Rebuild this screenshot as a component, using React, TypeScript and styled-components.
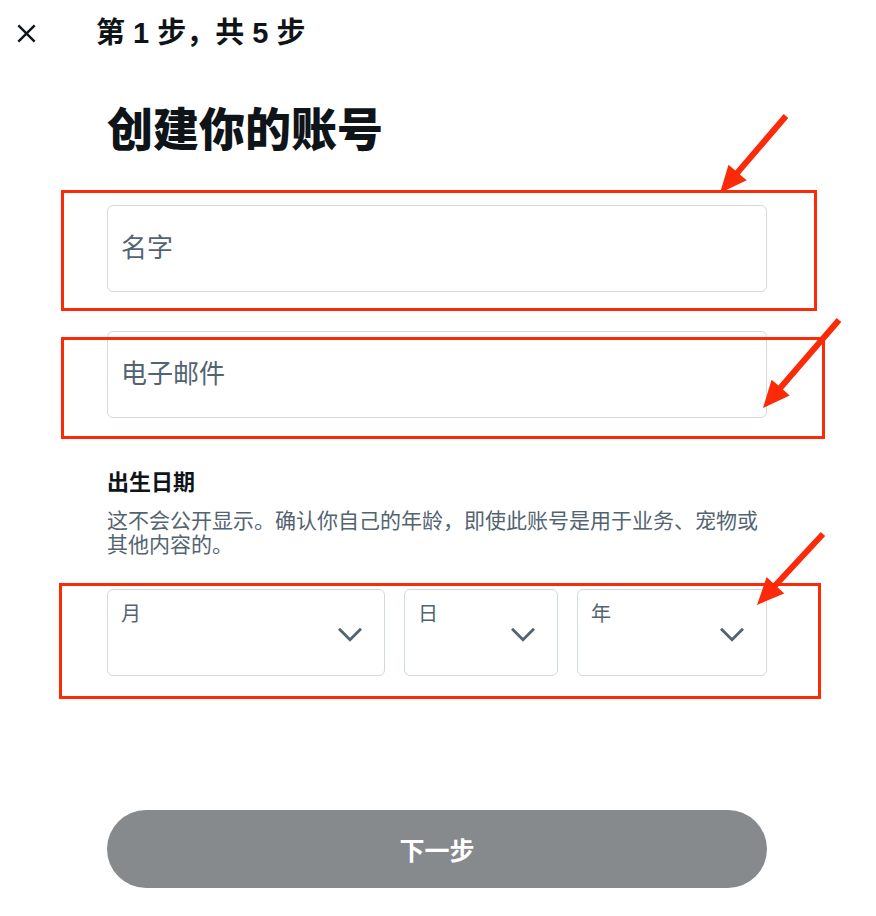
import React from "react";
import styled, { createGlobalStyle } from "styled-components";

const GlobalStyle = createGlobalStyle`
  html, body { margin: 0; padding: 0; background: #ffffff; }
  * { box-sizing: border-box; }
  body { font-family: "Liberation Sans", "Noto Sans CJK SC", sans-serif; }
`;

const FONT = `"Liberation Sans", "Noto Sans CJK SC", sans-serif`;
const RED = "#fb2a08";

const Page = styled.div`
  position: relative;
  width: 876px;
  min-height: 916px;
  background: #ffffff;
  font-family: ${FONT};
  color: #0f1419;
`;

const Header = styled.header`
  height: 66px;
  display: flex;
  align-items: center;
  padding-left: 11px;
`;

const CloseButton = styled.button`
  width: 30px;
  height: 30px;
  padding: 0;
  border: none;
  background: transparent;
  display: flex;
  align-items: center;
  justify-content: center;
  color: #0f1419;
`;

const StepTitle = styled.h2`
  margin: 0 0 0 55px;
  font-size: 29px;
  font-weight: 700;
  line-height: 34px;
  color: #0f1419;
`;

const Main = styled.main`
  width: 660px;
  margin-left: 107px;
  display: flex;
  flex-direction: column;
`;

const Title = styled.h1`
  margin: 36px 0 0;
  font-size: 46px;
  line-height: 56px;
  font-weight: 900;
  color: #0f1419;
`;

const Fields = styled.div`
  margin-top: 47px;
  display: flex;
  flex-direction: column;
  gap: 39px;
`;

const Field = styled.input`
  width: 100%;
  height: 87px;
  border: 1px solid #cfd9de;
  border-radius: 6px;
  padding: 0 13px;
  font-family: ${FONT};
  font-size: 26px;
  color: #0f1419;
  outline: none;
  background: #ffffff;
  &::placeholder { color: #536471; }
`;

const SectionHeading = styled.h3`
  margin: 51px 0 0;
  font-size: 22px;
  line-height: 28px;
  font-weight: 700;
  color: #0f1419;
`;

const Description = styled.p`
  margin: 12px 0 0;
  font-size: 21px;
  line-height: 24px;
  color: #536471;
`;

const SelectRow = styled.div`
  margin-top: 32px;
  display: grid;
  grid-template-columns: 278px 154px 190px;
  gap: 19px;
`;

const SelectBox = styled.div`
  height: 87px;
  border: 1px solid #cfd9de;
  border-radius: 6px;
  display: flex;
  justify-content: space-between;
  align-items: flex-start;
  padding: 12px 17px 0 13px;
`;

const SelectLabel = styled.span`
  font-size: 20px;
  line-height: 24px;
  color: #536471;
`;

const Chevron = styled.svg`
  width: 34px;
  height: 34px;
  align-self: center;
  margin-top: -10px;
  fill: #536471;
`;

const NextButton = styled.button`
  margin-top: 134px;
  height: 78px;
  width: 100%;
  border: none;
  border-radius: 999px;
  background: #878a8d;
  color: #ffffff;
  font-family: ${FONT};
  font-size: 25px;
  font-weight: 700;
`;

const Overlay = styled.svg`
  position: absolute;
  left: 0;
  top: 0;
  width: 876px;
  height: 916px;
  pointer-events: none;
`;

function arrowPoints(tx: number, ty: number, hx: number, hy: number) {
  const dx = hx - tx;
  const dy = hy - ty;
  const len = Math.hypot(dx, dy);
  const ux = dx / len;
  const uy = dy / len;
  const px = -uy;
  const py = ux;
  const headLen = 27;
  const headHalf = 12;
  const shaftHalf = 3;
  const bx = hx - ux * headLen;
  const by = hy - uy * headLen;
  const pts = [
    [tx + px * shaftHalf, ty + py * shaftHalf],
    [bx + px * shaftHalf, by + py * shaftHalf],
    [bx + px * headHalf, by + py * headHalf],
    [hx, hy],
    [bx - px * headHalf, by - py * headHalf],
    [bx - px * shaftHalf, by - py * shaftHalf],
    [tx - px * shaftHalf, ty - py * shaftHalf],
  ];
  return pts.map((p) => `${p[0].toFixed(1)},${p[1].toFixed(1)}`).join(" ");
}

const boxes = [
  { x: 62.5, y: 191.5, w: 753, h: 118 },
  { x: 62.5, y: 338.5, w: 761, h: 99 },
  { x: 60.5, y: 584.5, w: 759, h: 113 },
];

const arrows = [
  { t: [786, 116], h: [720, 193] },
  { t: [839, 320], h: [763, 408] },
  { t: [823, 534], h: [757, 605] },
];

const ChevronIcon = () => (
  <Chevron viewBox="0 0 24 24" aria-hidden="true">
    <path d="M3.543 8.96l1.414-1.42L12 14.59l7.043-7.05 1.414 1.42L12 17.41 3.543 8.96z" />
  </Chevron>
);

export default function App() {
  return (
    <Page>
      <GlobalStyle />
      <Header>
        <CloseButton aria-label="关闭">
          <svg width="29" height="29" viewBox="0 0 24 24" fill="#0f1419">
            <path d="M10.59 12L4.54 5.96l1.42-1.42L12 10.59l6.04-6.05 1.42 1.42L13.41 12l6.05 6.04-1.42 1.42L12 13.41l-6.04 6.05-1.42-1.42L10.59 12z" />
          </svg>
        </CloseButton>
        <StepTitle>第 1 步，共 5 步</StepTitle>
      </Header>
      <Main>
        <Title>创建你的账号</Title>
        <Fields>
          <Field placeholder="名字" />
          <Field placeholder="电子邮件" />
        </Fields>
        <SectionHeading>出生日期</SectionHeading>
        <Description>
          这不会公开显示。确认你自己的年龄，即使此账号是用于业务、宠物或其他内容的。
        </Description>
        <SelectRow>
          <SelectBox>
            <SelectLabel>月</SelectLabel>
            <ChevronIcon />
          </SelectBox>
          <SelectBox>
            <SelectLabel>日</SelectLabel>
            <ChevronIcon />
          </SelectBox>
          <SelectBox>
            <SelectLabel>年</SelectLabel>
            <ChevronIcon />
          </SelectBox>
        </SelectRow>
        <NextButton>下一步</NextButton>
      </Main>
      <Overlay viewBox="0 0 876 916">
        {boxes.map((b, i) => (
          <rect key={i} x={b.x} y={b.y} width={b.w} height={b.h} fill="none" stroke={RED} strokeWidth={3} />
        ))}
        {arrows.map((a, i) => (
          <polygon key={i} points={arrowPoints(a.t[0], a.t[1], a.h[0], a.h[1])} fill={RED} />
        ))}
      </Overlay>
    </Page>
  );
}
